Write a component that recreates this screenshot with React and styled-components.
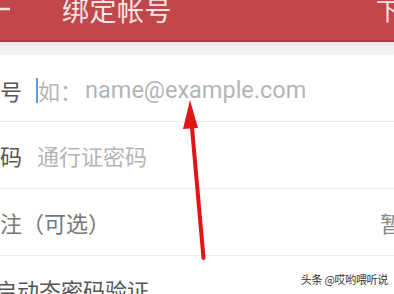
import React from "react";
import styled, { createGlobalStyle } from "styled-components";

const Global = createGlobalStyle`
  html, body { margin: 0; padding: 0; background: #fff; }
  body {
    width: 394px; height: 294px; overflow: hidden;
    font-family: Roboto, "Noto Sans CJK SC", sans-serif;
  }
  #root { position: relative; width: 394px; height: 294px; overflow: hidden; }
`;

const Screen = styled.div`
  display: flex;
  flex-direction: column;
  width: 394px;
  height: 294px;
  overflow: hidden;
`;

const Header = styled.header`
  display: flex;
  align-items: center;
  flex-shrink: 0;
  height: 62px;
  margin-top: -22px;
  margin-left: -16px;
  margin-right: -40px;
  padding: 0;
  background: #c1474a;
  border-bottom: 2px solid #ad3d40;
  color: #f8e4e4;
`;

const Back = styled.div`
  width: 26px;
  height: 24px;
  display: flex;
  align-items: center;
  margin-right: 52px;
`;

const Title = styled.h1`
  margin: 0;
  flex: 1;
  font-size: 27px;
  font-weight: 400;
  letter-spacing: 0.5px;
  white-space: nowrap;
  font-family: "Noto Sans CJK SC", sans-serif;
`;

const HeaderAction = styled.span`
  font-size: 24px;
  font-family: "Noto Sans CJK SC", sans-serif;
  width: 58px;
  white-space: nowrap;
  overflow: visible;
`;

const Strip = styled.div`
  height: 13px;
  flex-shrink: 0;
  background: linear-gradient(#ebebeb, #f5f5f5);
`;

const Form = styled.div`
  display: flex;
  flex-direction: column;
  margin-left: -22px;
  margin-right: -30px;
`;

const Row = styled.div`
  display: flex;
  align-items: ${(p) => (p.$top ? "flex-start" : "center")};
  height: 67px;
  flex-shrink: 0;
  border-bottom: ${(p) => (p.$last ? "none" : "1px solid #ececec")};
  padding-top: ${(p) => p.$pt || 0}px;
  box-sizing: border-box;
  font-size: 22px;
  font-family: "Noto Sans CJK SC", sans-serif;
`;

const Label = styled.span`
  color: ${(p) => p.$color || "#555"};
  width: ${(p) => (p.$w ? p.$w + "px" : "auto")};
  margin-left: ${(p) => p.$shift || 0}px;
  flex-shrink: 0;
  white-space: nowrap;
`;

const Input = styled.div`
  flex: 1;
  display: flex;
  align-items: center;
  color: #b4b4b4;
  white-space: nowrap;
`;

const Caret = styled.span`
  display: inline-block;
  width: 2px;
  height: 25px;
  background: #5c9fd8;
`;

const Latin = styled.span`
  font-family: Roboto, sans-serif;
  font-size: 23.5px;
  margin-left: 3px;
  color: #b4b4b4;
`;

const RightText = styled.span`
  color: #888;
  white-space: nowrap;
`;

const Arrow = styled.svg`
  position: absolute;
  left: 0;
  top: 0;
  pointer-events: none;
`;

const Watermark = styled.div`
  position: absolute;
  right: 6px;
  bottom: 7px;
  font-size: 11px;
  color: #333;
  font-family: "Noto Sans CJK SC", sans-serif;
  letter-spacing: -0.3px;
`;

export default function App() {
  return (
    <>
      <Global />
      <Screen>
        <Header>
          <Back>
            <svg width="26" height="24" viewBox="0 0 26 24">
              <path d="M2 12 H26 M2 12 L11 3 M2 12 L11 21" stroke="#f8e4e4" strokeWidth="2.5" fill="none" />
            </svg>
          </Back>
          <Title>绑定帐号</Title>
          <HeaderAction>下一步</HeaderAction>
        </Header>
        <Strip />
        <Form>
          <Row $pt={4}>
            <Label $w={58}>帐号</Label>
            <Input>
              <Caret />
              <span>如：</span>
              <Latin>name@example.com</Latin>
            </Input>
          </Row>
          <Row>
            <Label $w={59}>密码</Label>
            <Input>通行证密码</Input>
          </Row>
          <Row>
            <Label $color="#777">备注（可选）</Label>
            <Input />
            <RightText>暂无</RightText>
          </Row>
          <Row $last $top $pt={17}>
            <Label $color="#555" $shift={-5}>开启动态密码验证</Label>
          </Row>
        </Form>
      </Screen>
      <Arrow width="394" height="294" viewBox="0 0 394 294">
        <line x1="203.5" y1="258" x2="191.5" y2="122" stroke="#e01515" strokeWidth="4" strokeLinecap="round" />
        <polygon points="190,100 198,128 183,129" fill="#e01515" />
      </Arrow>
      <Watermark>头条 @哎哟喂听说</Watermark>
    </>
  );
}
